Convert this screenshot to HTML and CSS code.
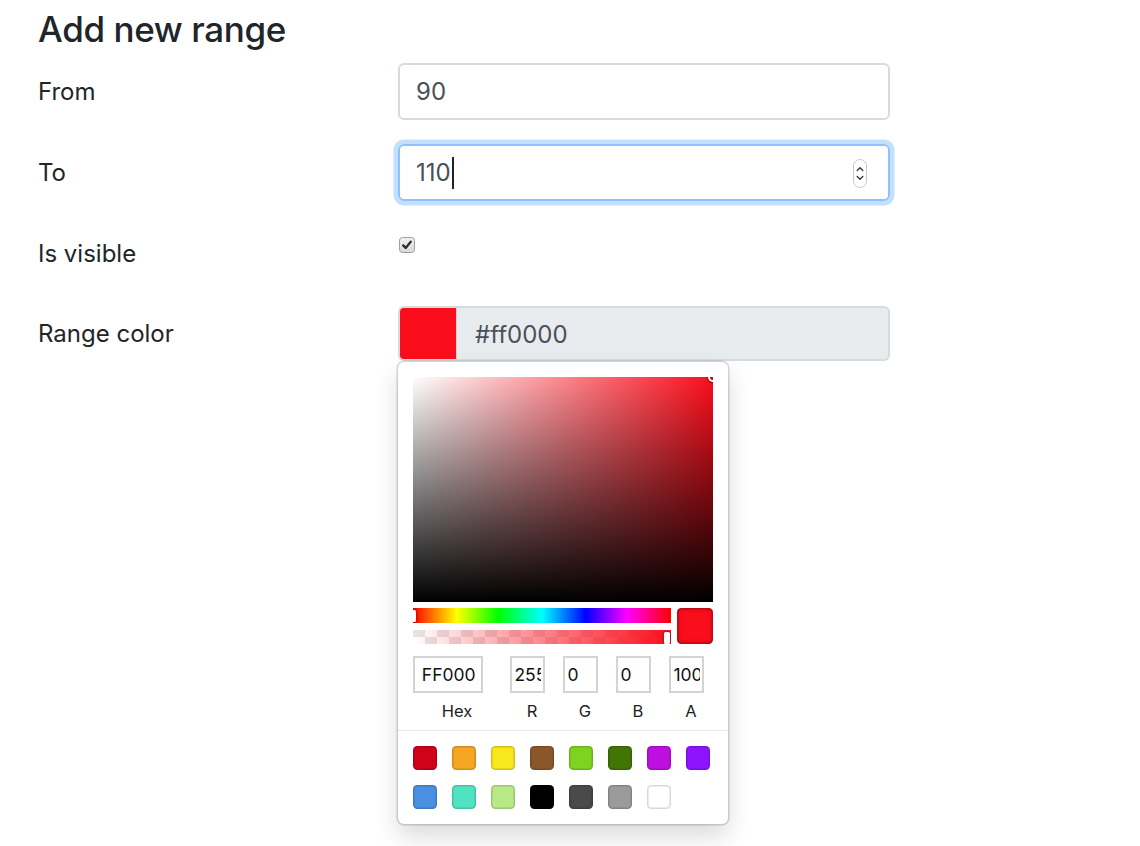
FILE: index.html
```html
<!DOCTYPE html>
<html>
<head>
<meta charset="utf-8">
<link rel="stylesheet" href="styles.css">
</head>
<body>
<div class="page">
  <h4 class="title">Add new range</h4>
  <div class="form">
    <div class="row">
      <label class="lbl">From</label>
      <div class="ctl"><div class="input">90</div></div>
    </div>
    <div class="row">
      <label class="lbl">To</label>
      <div class="ctl">
        <div class="input focus"><span>110</span><span class="caret"></span>
          <svg class="spin" width="14" height="29" viewBox="0 0 14 29"><rect x="0.5" y="0.5" width="13" height="28" rx="6.5" fill="#fff" stroke="#c9c9c9"/><path d="M4.2 11.6 L7 8.8 L9.8 11.6" stroke="#3a3a3a" stroke-width="1.4" fill="none" stroke-linecap="round" stroke-linejoin="round"/><path d="M4.2 17.4 L7 20.2 L9.8 17.4" stroke="#3a3a3a" stroke-width="1.4" fill="none" stroke-linecap="round" stroke-linejoin="round"/></svg>
        </div>
      </div>
    </div>
    <div class="row">
      <label class="lbl">Is visible</label>
      <div class="ctl ctl-check">
        <svg width="16" height="16" viewBox="0 0 16 16"><defs><linearGradient id="cb" x1="0" y1="0" x2="0" y2="1"><stop offset="0" stop-color="#f2f2f2"/><stop offset="1" stop-color="#d9d9d9"/></linearGradient></defs><rect x="0.5" y="0.5" width="15" height="15" rx="3" fill="url(#cb)" stroke="#9d9d9d"/><path d="M4.2 8.4 L6.7 11 L11.8 4.6" stroke="#2b2b2b" stroke-width="2.3" fill="none" stroke-linecap="round" stroke-linejoin="round"/></svg>
      </div>
    </div>
    <div class="row row-color">
      <label class="lbl">Range color</label>
      <div class="ctl ctl-color">
        <div class="cgroup">
          <span class="cswatch"></span>
          <div class="cfield">#ff0000</div>
        </div>
        <div class="picker">
          <div class="sat"><div class="sat-ptr"></div></div>
          <div class="controls">
            <div class="sliders">
              <div class="hue"><div class="hue-ptr"></div></div>
              <div class="alpha"><div class="alpha-ptr"></div></div>
            </div>
            <div class="active"></div>
          </div>
          <div class="fields">
            <div class="f2"><div class="fin"><div class="fin-t">FF0000</div></div><span class="flabel">Hex</span></div>
            <div class="f1"><div class="fin"><div class="fin-t">255</div></div><span class="flabel">R</span></div>
            <div class="f1"><div class="fin"><div class="fin-t">0</div></div><span class="flabel">G</span></div>
            <div class="f1"><div class="fin"><div class="fin-t">0</div></div><span class="flabel">B</span></div>
            <div class="f1"><div class="fin"><div class="fin-t">100</div></div><span class="flabel">A</span></div>
          </div>
          <div class="presets">
            <span class="sw c1"></span><span class="sw c2"></span><span class="sw c3"></span><span class="sw c4"></span><span class="sw c5"></span><span class="sw c6"></span><span class="sw c7"></span><span class="sw c8"></span>
            <span class="sw c9"></span><span class="sw c10"></span><span class="sw c11"></span><span class="sw c12"></span><span class="sw c13"></span><span class="sw c14"></span><span class="sw c15"></span>
          </div>
        </div>
      </div>
    </div>
  </div>
</div>
</body>
</html>
```
FILE: styles.css
```css
html, body {
  min-height: 846px;
}
body {
  margin: 0;
  font-family: Inter, "Liberation Sans", sans-serif;
  color: #212529;
  background: #fff;
}
.page {
  padding: 8px 0 0 38px;
  min-height: 838px;
}
.title {
  font-size: 35px;
  font-weight: 500;
  letter-spacing: -0.4px;
  line-height: 43px;
  margin: 0 0 12px;
}
.row {
  display: flex;
  align-items: center;
  height: 57px;
  margin-bottom: 24px;
}
.lbl {
  width: 360px;
  font-size: 24px;
  line-height: 36px;
}
.ctl {
  width: 492px;
}
.input {
  box-sizing: border-box;
  height: 57px;
  border: 2px solid #d6dbe0;
  border-radius: 6px;
  padding: 0 21px 0 16px;
  display: flex;
  align-items: center;
  font-size: 24px;
  color: #495057;
}
.input.focus {
  border-color: #8cc3ff;
  box-shadow: 0 0 0 4.5px #c4e0ff;
}
.caret {
  width: 2px;
  height: 32px;
  background: #222;
  margin-left: 1px;
}
.spin {
  margin-left: auto;
  margin-top: 1px;
}
.ctl-check {
  align-self: flex-start;
  padding-top: 12px;
  height: 16px;
  line-height: 0;
  padding-left: 1px;
  box-sizing: content-box;
  width: 491px;
}
.row-color {
  height: 55px;
}
.ctl-color {
  position: relative;
  align-self: stretch;
}
.cgroup {
  display: flex;
  height: 55px;
}
.cswatch {
  width: 59px;
  box-sizing: border-box;
  background: #fb0e1c;
  border: 2px solid #d6dbe0;
  border-right: 1px solid #cfd4d9;
  border-radius: 6px 0 0 6px;
}
.cfield {
  flex: 1;
  box-sizing: border-box;
  background: #e9ecef;
  border: 2px solid #d6dbe0;
  border-left: none;
  border-radius: 0 6px 6px 0;
  padding: 2px 0 0 18px;
  display: flex;
  align-items: center;
  font-size: 24px;
  color: #495057;
}
.picker {
  position: absolute;
  left: 0;
  top: 56px;
  width: 300px;
  padding: 15px 15px 0;
  background: #fff;
  border-radius: 6px;
  box-shadow: 0 0 0 1.5px rgba(0, 0, 0, 0.15), 0 12px 24px rgba(0, 0, 0, 0.15);
  z-index: 2;
}
.sat {
  position: relative;
  height: 225px;
  overflow: hidden;
  background: linear-gradient(to top, #000, rgba(0, 0, 0, 0)), linear-gradient(to right, #fff, rgba(255, 255, 255, 0)), #fb0e1c;
}
.sat-ptr {
  position: absolute;
  right: -3px;
  top: -3px;
  width: 6px;
  height: 6px;
  border-radius: 50%;
  box-shadow: 0 0 0 2px #fff, inset 0 0 1.5px 1.5px rgba(0, 0, 0, 0.3), 0 0 1.5px 3px rgba(0, 0, 0, 0.4);
}
.controls {
  display: flex;
}
.sliders {
  flex: 1;
  padding: 6px 0;
}
.hue {
  position: relative;
  height: 15px;
  overflow: hidden;
  background: linear-gradient(to right, #f00 0%, #ff0 17%, #0f0 33%, #0ff 50%, #00f 67%, #f0f 83%, #f00 100%);
}
.hue-ptr {
  position: absolute;
  left: -3px;
  top: 1.5px;
  width: 6px;
  height: 12px;
  border-radius: 1.5px;
  background: #fff;
  box-shadow: 0 0 3px rgba(0, 0, 0, 0.6);
}
.alpha {
  position: relative;
  height: 14px;
  margin-top: 7px;
  overflow: hidden;
  background: linear-gradient(to right, rgba(251, 14, 28, 0), #fb0e1c), conic-gradient(#fff 0 25%, #e6e6e6 0 50%, #fff 0 75%, #e6e6e6 0) 0 0 / 24px 14px;
}
.alpha-ptr {
  position: absolute;
  right: 1px;
  top: 2px;
  width: 6px;
  height: 12px;
  border-radius: 1.5px;
  background: #fff;
  box-shadow: 0 0 3px rgba(0, 0, 0, 0.6);
}
.active {
  width: 36px;
  height: 36px;
  margin: 6px 0 0 6px;
  border-radius: 4.5px;
  background: #fb0e1c;
  box-shadow: inset 0 0 0 1.5px rgba(0, 0, 0, 0.15), inset 0 0 6px rgba(0, 0, 0, 0.25);
}
.fields {
  display: flex;
  padding-top: 6px;
}
.f2 {
  flex: 2;
}
.f1 {
  flex: 1;
  padding-left: 9px;
}
.fin {
  box-sizing: border-box;
  width: 80%;
  height: 37px;
  padding: 0 10%;
  display: flex;
  align-items: center;
  box-shadow: inset 0 0 0 2px #d4d4d4;
  font-size: 17.5px;
  color: #111;
  background: #fff;
}
.fin-t {
  flex: 1;
  min-width: 0;
  overflow: hidden;
  white-space: nowrap;
}
.flabel {
  display: block;
  text-align: center;
  font-size: 16.5px;
  color: #222;
  padding: 5px 0 6px;
  line-height: 26px;
}
.presets {
  display: flex;
  flex-wrap: wrap;
  margin: 0 -15px;
  padding: 15px 0 0 15px;
  border-top: 1px solid #e6e6e6;
}
.sw {
  width: 24px;
  height: 24px;
  margin: 0 15px 15px 0;
  border-radius: 4.5px;
  box-shadow: inset 0 0 0 1.5px rgba(0, 0, 0, 0.15);
}
.c1 { background: #d0021b; }
.c2 { background: #f5a623; }
.c3 { background: #f8e71c; }
.c4 { background: #8b572a; }
.c5 { background: #7ed321; }
.c6 { background: #417505; }
.c7 { background: #bd10e0; }
.c8 { background: #9013fe; }
.c9 { background: #4a90e2; }
.c10 { background: #50e3c2; }
.c11 { background: #b8e986; }
.c12 { background: #000000; }
.c13 { background: #4a4a4a; }
.c14 { background: #9b9b9b; }
.c15 { background: #ffffff; }
```
